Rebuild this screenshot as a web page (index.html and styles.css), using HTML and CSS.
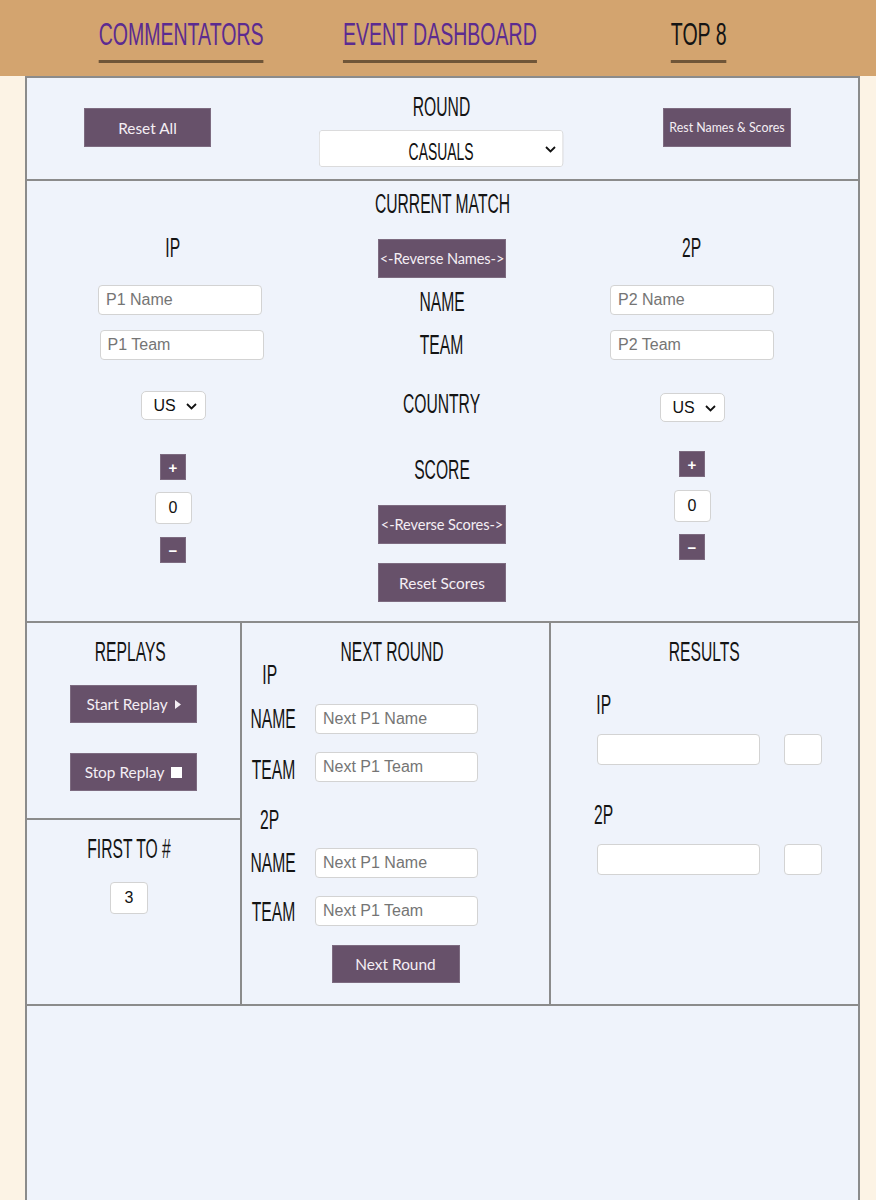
FILE: index.html
```html
<!DOCTYPE html>
<html lang="en">
<head>
<meta charset="utf-8">
<title>Event Dashboard</title>
<link rel="stylesheet" href="styles.css">
</head>
<body>
<header class="nav">
  <a class="nav-link" href="#">COMMENTATORS</a>
  <a class="nav-link" href="#">EVENT DASHBOARD</a>
  <a class="nav-link active" href="#">TOP 8</a>
</header>

<main class="board">
  <section class="top-bar">
    <button class="btn btn-top">Reset All</button>
    <div class="round-group">
      <h2 class="cond">ROUND</h2>
      <span class="select-wrap round-wrap">
        <select class="round-select"><option>CASUALS</option></select>
        <svg class="chev" width="11" height="7" viewBox="0 0 11 7"><path d="M1 1l4.5 4.5L10 1" fill="none" stroke="#111" stroke-width="1.8"/></svg>
      </span>
    </div>
    <button class="btn btn-top btn-small">Rest Names &amp; Scores</button>
  </section>

  <section class="match">
    <h2 class="cond match-title">CURRENT MATCH</h2>
    <div class="match-grid">
      <div class="col col-left">
        <span class="cond">IP</span>
        <input class="text-input m-name l-name" placeholder="P1 Name">
        <input class="text-input m-team l-team" placeholder="P1 Team">
        <span class="select-wrap country-wrap m-country">
          <select class="country-select"><option>US</option></select>
          <svg class="chev" width="11" height="7" viewBox="0 0 11 7"><path d="M1 1l4.5 4.5L10 1" fill="none" stroke="#111" stroke-width="1.8"/></svg>
        </span>
        <button class="step m-plus">+</button>
        <input class="num-input m-score" value="0">
        <button class="step m-minus">&minus;</button>
      </div>
      <div class="col col-mid">
        <button class="btn btn-mid m-rev">&lt;-Reverse Names-&gt;</button>
        <span class="cond m-label-name">NAME</span>
        <span class="cond m-label-team">TEAM</span>
        <span class="cond m-label-country">COUNTRY</span>
        <span class="cond m-label-score">SCORE</span>
        <button class="btn btn-mid m-revs">&lt;-Reverse Scores-&gt;</button>
        <button class="btn m-reset">Reset Scores</button>
      </div>
      <div class="col col-right">
        <span class="cond">2P</span>
        <input class="text-input m-name" placeholder="P2 Name">
        <input class="text-input m-team" placeholder="P2 Team">
        <span class="select-wrap country-wrap r-country">
          <select class="country-select"><option>US</option></select>
          <svg class="chev" width="11" height="7" viewBox="0 0 11 7"><path d="M1 1l4.5 4.5L10 1" fill="none" stroke="#111" stroke-width="1.8"/></svg>
        </span>
        <button class="step r-plus">+</button>
        <input class="num-input r-score" value="0">
        <button class="step r-minus">&minus;</button>
      </div>
    </div>
  </section>

  <section class="lower">
    <div class="cell replays">
      <h2 class="cond">REPLAYS</h2>
      <button class="btn r-start">Start Replay <svg width="6" height="9" viewBox="0 0 6 9"><path d="M0 0l6 4.5L0 9z" fill="#f4eef4"/></svg></button>
      <button class="btn r-stop">Stop Replay <svg width="11" height="11" viewBox="0 0 11 11"><rect width="11" height="11" fill="#fff"/></svg></button>
    </div>
    <div class="cell first-to">
      <h2 class="cond">FIRST TO #</h2>
      <input class="num-input ft-input" value="3">
    </div>
    <div class="cell next-round">
      <h2 class="cond">NEXT ROUND</h2>
      <div class="side-label nr-ip"><span class="cond">IP</span></div>
      <div class="nr-row nr-row1">
        <div class="row-label"><span class="cond">NAME</span></div>
        <input class="text-input nr-input" placeholder="Next P1 Name">
      </div>
      <div class="nr-row nr-row2">
        <div class="row-label team-a"><span class="cond">TEAM</span></div>
        <input class="text-input nr-input" placeholder="Next P1 Team">
      </div>
      <div class="side-label nr-2p"><span class="cond">2P</span></div>
      <div class="nr-row nr-row3">
        <div class="row-label"><span class="cond">NAME</span></div>
        <input class="text-input nr-input" placeholder="Next P1 Name">
      </div>
      <div class="nr-row nr-row4">
        <div class="row-label team-b"><span class="cond">TEAM</span></div>
        <input class="text-input nr-input" placeholder="Next P1 Team">
      </div>
      <button class="btn nr-btn">Next Round</button>
    </div>
    <div class="cell results">
      <h2 class="cond">RESULTS</h2>
      <div class="res-label res-ip"><span class="cond">IP</span></div>
      <div class="res-row">
        <input class="text-input res-name">
        <input class="text-input res-score">
      </div>
      <div class="res-label res-2p"><span class="cond">2P</span></div>
      <div class="res-row">
        <input class="text-input res-name">
        <input class="text-input res-score">
      </div>
    </div>
  </section>

  <section class="empty"></section>
</main>
</body>
</html>
```

FILE: styles.css
```css
* { box-sizing: border-box; }

body {
  margin: 0;
  background: #fcf3e5;
  font-family: "Liberation Sans", Arial, sans-serif;
}

/* ---------- navigation ---------- */
.nav {
  height: 76px;
  background: #d3a46f;
  display: grid;
  grid-template-columns: repeat(3, 259px);
  justify-content: center;
  align-items: start;
  padding: 18px 0 0 4px;
}

.nav-link {
  justify-self: center;
  display: inline-block;
  font-family: "Liberation Sans Narrow", "Liberation Sans", sans-serif;
  font-size: 32px;
  line-height: 32px;
  color: #5b2b91;
  text-decoration: none;
  padding-bottom: 10px;
  border-bottom: 3px solid #6f5538;
  transform: scaleX(0.61);
  white-space: nowrap;
}

.nav-link.active { color: #141414; }

/* ---------- shared ---------- */
.cond {
  display: inline-block;
  margin: 0;
  font-family: "Liberation Sans Narrow", "Liberation Sans", sans-serif;
  font-weight: normal;
  font-size: 27px;
  line-height: 27px;
  color: #141414;
  transform: scaleX(0.58);
  white-space: nowrap;
}

.btn {
  width: 128px;
  height: 39px;
  padding: 0;
  background: #67516a;
  border: 1px solid #7d6b80;
  color: #f4eef4;
  font-family: Lato, "Open Sans", sans-serif;
  font-size: 15.4px;
  white-space: nowrap;
  display: inline-flex;
  align-items: center;
  justify-content: center;
  gap: 7px;
}

.btn-small { font-size: 12.4px; }
.btn-mid { font-size: 14.6px; letter-spacing: -0.1px; }

.text-input {
  width: 164px;
  height: 30px;
  border: 1px solid #d3d3d3;
  border-radius: 4px;
  background: #fff;
  padding: 0 7px;
  font-family: "Liberation Sans", Arial, sans-serif;
  font-size: 16px;
  color: #222;
}

.text-input::placeholder { color: #757575; }

.num-input {
  width: 37px;
  height: 32px;
  border: 1px solid #d3d3d3;
  border-radius: 4px;
  background: #fff;
  text-align: center;
  font-family: "Liberation Sans", Arial, sans-serif;
  font-size: 16px;
  color: #111;
  padding: 0;
}

.select-wrap {
  position: relative;
  display: inline-block;
}

.select-wrap select {
  appearance: none;
  -webkit-appearance: none;
  background: #fff;
  border: 1px solid #d3d3d3;
  border-radius: 5px;
  color: #111;
  display: block;
}

.chev {
  position: absolute;
  top: 50%;
  margin-top: -3px;
  pointer-events: none;
}

.step {
  width: 26px;
  height: 26px;
  padding: 0;
  background: #67516a;
  border: 1px solid #7d6b80;
  color: #fff;
  font-family: "Liberation Sans", Arial, sans-serif;
  font-weight: bold;
  font-size: 15px;
  line-height: 1;
}

/* ---------- board ---------- */
.board {
  margin-left: 25px;
  width: 835px;
  border: 2px solid #8b8b8b;
  border-bottom: none;
  background: #eff3fb;
}

/* top bar */
.top-bar {
  height: 103px;
  border-bottom: 2px solid #8b8b8b;
  display: flex;
  justify-content: space-between;
  align-items: flex-start;
  padding: 0 67px 0 57px;
}

.btn-top { margin-top: 30px; width: 127px; }
.btn-top.btn-small { width: 128px; }

.round-group {
  margin-top: 16px;
  margin-left: 8px;
  width: 244px;
  display: flex;
  flex-direction: column;
  align-items: center;
}

.round-wrap {
  margin-top: 9px;
  width: 244px;
  height: 37px;
}

.round-select {
  width: 421px;
  height: 37px;
  font-family: "Liberation Sans Narrow", "Liberation Sans", sans-serif;
  font-size: 24px;
  text-align: center;
  text-align-last: center;
  padding: 5px 20px 0;
  border-radius: 8.6px / 5px;
  transform: scaleX(0.58);
  transform-origin: left top;
}

.round-wrap .chev { right: 7px; }

/* current match */
.match {
  border-bottom: 2px solid #8b8b8b;
  padding: 10px 0 19px;
  text-align: center;
}

.match-title { display: inline-block; }

.match-grid {
  margin-top: 17px;
  display: grid;
  grid-template-columns: 292px 246px 254px;
}

.col {
  display: flex;
  flex-direction: column;
  align-items: center;
}

.m-name { margin-top: 23px; }
.m-team { margin-top: 15px; }
.l-name { margin-left: 14px; }
.l-team { margin-left: 17px; }
.m-country { margin-top: 31px; }
.r-country { margin-top: 33px; }

.country-select {
  width: 65px;
  height: 29px;
  font-family: "Liberation Sans", Arial, sans-serif;
  font-size: 16px;
  padding: 0 0 0 12px;
}

.country-wrap .chev { right: 9px; }

.m-plus { margin-top: 34px; }
.m-score { margin-top: 12px; }
.m-minus { margin-top: 13px; }
.r-plus { margin-top: 29px; }
.r-score { margin-top: 13px; }
.r-minus { margin-top: 12px; }

.m-rev { margin-top: 4px; }
.m-label-name { margin-top: 11px; }
.m-label-team { margin-top: 16px; }
.m-label-country { margin-top: 32px; }
.m-label-score { margin-top: 39px; }
.m-revs { margin-top: 21px; }
.m-reset { margin-top: 19px; }

/* lower grid */
.lower {
  display: grid;
  grid-template-columns: 215px 309px 1fr;
  grid-template-rows: 197px 184px;
  border-bottom: 2px solid #8b8b8b;
}

.cell {
  display: flex;
  flex-direction: column;
  align-items: center;
  padding-top: 16px;
}

.replays {
  border-right: 2px solid #8b8b8b;
  border-bottom: 2px solid #8b8b8b;
}

.replays > h2 { margin-right: 7px; }

.r-start { margin-top: 19px; width: 127px; height: 38px; }
.r-stop { margin-top: 30px; width: 127px; height: 38px; }

.first-to {
  grid-column: 1;
  grid-row: 2;
  border-right: 2px solid #8b8b8b;
  padding-right: 9px;
}

.ft-input { margin-top: 19px; width: 38px; }

.next-round {
  grid-column: 2;
  grid-row: 1 / span 2;
  border-right: 2px solid #8b8b8b;
  align-items: stretch;
  text-align: center;
}

.next-round > h2 { align-self: center; margin-left: -6px; }

.side-label {
  width: 56px;
  display: flex;
  justify-content: center;
}

.nr-ip { margin-top: -4px; }
.nr-2p { margin-top: 23px; }

.nr-row {
  display: grid;
  grid-template-columns: 62px 163px;
  column-gap: 11px;
  align-items: center;
}

.row-label {
  display: flex;
  justify-content: center;
}

.nr-row1 { margin-top: 15px; }
.nr-row2 { margin-top: 16px; }
.nr-row3 { margin-top: 14px; }
.nr-row4 { margin-top: 17px; }

.team-a { align-self: start; margin-top: 7px; }
.team-b { align-self: start; margin-top: 4px; }

.nr-input { width: 163px; }

.nr-btn { align-self: center; margin-top: 19px; height: 38px; }

.results {
  grid-column: 3;
  grid-row: 1 / span 2;
  align-items: stretch;
}

.results > h2 { align-self: center; }

.res-label {
  width: 106px;
  display: flex;
  justify-content: center;
}

.res-ip { margin-top: 26px; }
.res-2p { margin-top: 37px; }

.res-row {
  margin-top: 15px;
  padding-left: 46px;
  display: flex;
  gap: 24px;
}

.res-name { width: 163px; height: 31px; }
.res-score { width: 38px; height: 31px; }

.empty {
  min-height: 200px;
}
```
